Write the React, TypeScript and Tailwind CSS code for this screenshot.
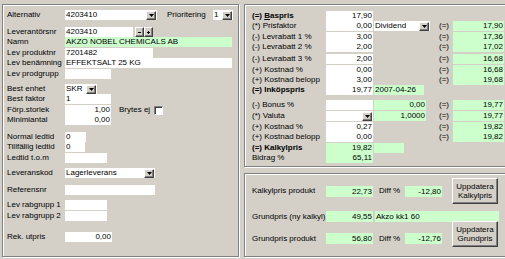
import React from 'react';

const panel =
  'border border-[#808080] shadow-[inset_1px_1px_0_#fff,1px_1px_0_#fff]';

const raised =
  'bg-[#d4d0c8] border border-t-white border-l-white border-r-[#404040] border-b-[#404040] shadow-[inset_-1px_-1px_0_#808080]';

function Arrow() {
  return (
    <svg width="5" height="3" viewBox="0 0 5 3">
      <path d="M0 0h5L2.5 3z" fill="#000" />
    </svg>
  );
}

function DropBtn() {
  return (
    <div className={`w-[10px] h-[9px] shrink-0 flex items-center justify-center ${raised}`}>
      <Arrow />
    </div>
  );
}

function Field({ w, green, right, children, className = '' }: { w: string; green?: boolean; right?: boolean; children?: React.ReactNode; className?: string }) {
  return (
    <div
      className={`${w} h-full shrink-0 whitespace-nowrap overflow-hidden px-[1px] ${green ? 'bg-[#ccffcc]' : 'bg-white'} ${right ? 'text-right' : 'text-left'} ${className}`}
    >
      {children}
    </div>
  );
}

function Combo({ w, children }: { w: string; children?: React.ReactNode }) {
  return (
    <div className={`${w} h-full shrink-0 bg-white flex items-center justify-between pl-[1px] pr-[1px]`}>
      <span className="whitespace-nowrap">{children}</span>
      <DropBtn />
    </div>
  );
}

function LRow({ label, mt, children }: { label: string; mt: string; children?: React.ReactNode }) {
  return (
    <div className={`flex items-center h-[10px] ${mt}`}>
      <div className="w-[58px] shrink-0 whitespace-nowrap">{label}</div>
      {children}
    </div>
  );
}

function RRow({
  label,
  bold,
  mt,
  f1,
  col2,
  eq,
}: {
  label: React.ReactNode;
  bold?: boolean;
  mt: string;
  f1?: React.ReactNode;
  col2?: React.ReactNode;
  eq?: string;
}) {
  return (
    <div className={`flex items-center h-[10px] ${mt}`}>
      <div className={`w-[74px] shrink-0 whitespace-nowrap ${bold ? 'font-bold' : ''}`}>{label}</div>
      {f1 === undefined ? <div className="w-[47px] shrink-0" /> : f1}
      <div className="w-[1px] shrink-0" />
      <div className="w-[52px] h-full shrink-0 flex">{col2}</div>
      {eq !== undefined && (
        <>
          <div className="w-[27px] shrink-0 pl-[13px]">(=)</div>
          <Field w="w-[51px]" green right>
            {eq}
          </Field>
        </>
      )}
    </div>
  );
}

function Btn({ children }: { children: React.ReactNode }) {
  return (
    <div className={`w-[46px] h-[26px] shrink-0 flex items-center justify-center text-center leading-[9px] ${raised}`}>
      <div>{children}</div>
    </div>
  );
}

export default function App() {
  return (
    <div className="w-[505px] h-[259px] overflow-hidden bg-[#d4d0c8] text-black text-[8px] leading-[10px] [font-family:'Liberation_Sans',Arial,sans-serif] flex pt-[4px] pl-[2px] gap-[5px]">
      {/* Left panel */}
      <div className={`w-[237px] h-[253px] shrink-0 pl-[4px] flex flex-col ${panel}`}>
        <LRow label="Alternativ" mt="mt-[5px]">
          <Combo w="w-[92px]">4203410</Combo>
          <div className="ml-[10px] w-[46px] shrink-0">Prioritering</div>
          <Combo w="w-[20px]">1</Combo>
        </LRow>
        <LRow label="Leverantörsnr" mt="mt-[7px]">
          <Field w="w-[68px]">4203410</Field>
          <div className={`ml-[2px] w-[9px] h-[10px] flex items-center justify-center ${raised}`}>
            <div className="w-[3px] h-[1px] bg-black" />
          </div>
          <div className={`relative w-[9px] h-[10px] flex items-center justify-center ${raised}`}>
            <div className="w-[3px] h-[1px] bg-black" />
            <div className="absolute w-[1px] h-[3px] bg-black" />
          </div>
        </LRow>
        <LRow label="Namn" mt="mt-[0px]">
          <Field w="w-[167px]" green>
            AKZO NOBEL CHEMICALS AB
          </Field>
        </LRow>
        <LRow label="Lev produktnr" mt="mt-[1px]">
          <Field w="w-[88px]">7201482</Field>
        </LRow>
        <LRow label="Lev benämning" mt="mt-[0px]">
          <Field w="w-[167px]">EFFEKTSALT 25 KG</Field>
        </LRow>
        <LRow label="Lev prodgrupp" mt="mt-[1px]">
          <Field w="w-[46px]" />
        </LRow>
        <LRow label="Best enhet" mt="mt-[5px]">
          <Combo w="w-[32px]">SKR</Combo>
        </LRow>
        <LRow label="Best faktor" mt="mt-[0px]">
          <Field w="w-[46px]">1</Field>
        </LRow>
        <LRow label="Förp.storlek" mt="mt-[1px]">
          <Field w="w-[46px]" right>
            1,00
          </Field>
          <div className="ml-[8px] w-[35px] shrink-0">Brytes ej</div>
          <div className="w-[9px] h-[9px] bg-white border border-t-[#808080] border-l-[#808080] border-r-white border-b-white shadow-[inset_1px_1px_0_#404040]" />
        </LRow>
        <LRow label="Minimiantal" mt="mt-[0px]">
          <Field w="w-[46px]" right>
            0,00
          </Field>
        </LRow>
        <LRow label="Normal ledtid" mt="mt-[7px]">
          <Field w="w-[21px]">0</Field>
        </LRow>
        <LRow label="Tillfällig ledtid" mt="mt-[0px]">
          <Field w="w-[20px]">0</Field>
        </LRow>
        <LRow label="Ledtid t.o.m" mt="mt-[1px]">
          <Field w="w-[42px]" />
        </LRow>
        <LRow label="Leveranskod" mt="mt-[5px]">
          <Combo w="w-[90px]">Lagerleverans</Combo>
        </LRow>
        <LRow label="Referensnr" mt="mt-[7px]">
          <Field w="w-[90px]" />
        </LRow>
        <LRow label="Lev rabgrupp 1" mt="mt-[5px]">
          <Field w="w-[42px]" />
        </LRow>
        <LRow label="Lev rabgrupp 2" mt="mt-[1px]">
          <Field w="w-[42px]" />
        </LRow>
        <LRow label="Rek. utpris" mt="mt-[11px]">
          <Field w="w-[47px]" right>
            0,00
          </Field>
        </LRow>
      </div>

      {/* Right column */}
      <div className="w-[265px] shrink-0 flex flex-col gap-[6px]">
        <div className={`h-[163px] pl-[7px] flex flex-col ${panel}`}>
          <RRow
            mt="mt-[6px]"
            bold
            label={
              <>
                (=) <span className="underline">B</span>aspris
              </>
            }
            f1={<Field w="w-[47px]" right>17,90</Field>}
          />
          <RRow
            mt="mt-[0px]"
            label="(*) Prisfaktor"
            f1={<Field w="w-[47px]" right>0,00</Field>}
            col2={<Combo w="w-[56px]">Dividend</Combo>}
            eq="17,90"
          />
          <RRow mt="mt-[1px]" label="(-) Levrabatt 1 %" f1={<Field w="w-[47px]" right>3,00</Field>} eq="17,36" />
          <RRow mt="mt-[0px]" label="(-) Levrabatt 2 %" f1={<Field w="w-[47px]" right>2,00</Field>} eq="17,02" />
          <RRow mt="mt-[2px]" label="(-) Levrabatt 3 %" f1={<Field w="w-[47px]" right>2,00</Field>} eq="16,68" />
          <RRow mt="mt-[1px]" label="(+) Kostnad %" f1={<Field w="w-[47px]" right>0,00</Field>} eq="16,68" />
          <RRow mt="mt-[0px]" label="(+) Kostnad belopp" f1={<Field w="w-[47px]" right>3,00</Field>} eq="19,68" />
          <RRow
            mt="mt-[0px]"
            bold
            label="(=) Inköpspris"
            f1={<Field w="w-[47px]" right>19,77</Field>}
            col2={<Field w="w-[50px]" green className="text-center">2007-04-26</Field>}
          />
          <RRow
            mt="mt-[5px]"
            label="(-) Bonus %"
            f1={<Field w="w-[47px]" />}
            col2={<Field w="w-[52px]" green right>0,00</Field>}
            eq="19,77"
          />
          <RRow
            mt="mt-[1px]"
            label="(*) Valuta"
            f1={<Combo w="w-[47px]" />}
            col2={<Field w="w-[52px]" green right>1,0000</Field>}
            eq="19,77"
          />
          <RRow mt="mt-[1px]" label="(+) Kostnad %" f1={<Field w="w-[47px]" right>0,27</Field>} eq="19,82" />
          <RRow mt="mt-[0px]" label="(+) Kostnad belopp" f1={<Field w="w-[47px]" right>0,00</Field>} eq="19,82" />
          <RRow
            mt="mt-[1px]"
            bold
            label="(=) Kalkylpris"
            f1={<Field w="w-[47px]" green right>19,82</Field>}
            col2={<Field w="w-[30px]" green />}
          />
          <RRow mt="mt-[0px]" label="Bidrag %" f1={<Field w="w-[47px]" green right>65,11</Field>} />
        </div>

        <div className={`h-[84px] pl-[7px] flex flex-col ${panel}`}>
          <div className="mt-[4px] h-[26px] flex items-center">
            <div className="w-[74px] shrink-0 whitespace-nowrap">Kalkylpris produkt</div>
            <div className="h-[11px] flex leading-[11px]">
              <Field w="w-[47px]" green right>22,73</Field>
            </div>
            <div className="ml-[6px] w-[26px] shrink-0">Diff %</div>
            <div className="h-[11px] flex leading-[11px]">
              <Field w="w-[37px]" green right>-12,80</Field>
            </div>
            <div className="ml-[10px]">
              <Btn>
                Uppdatera
                <br />
                Kalkylpris
              </Btn>
            </div>
          </div>
          <div className="mt-[7px] h-[11px] leading-[11px] flex">
            <div className="w-[74px] shrink-0 whitespace-nowrap">Grundpris (ny kalkyl)</div>
            <Field w="w-[47px]" green right>49,55</Field>
            <div className="w-[2px] shrink-0" />
            <Field w="w-[124px]" green>Akzo kk1 60</Field>
          </div>
          <div className="-mt-[2px] h-[27px] flex items-end">
            <div className="mb-[3px] h-[11px] leading-[11px] flex">
              <div className="w-[74px] shrink-0 whitespace-nowrap">Grundpris produkt</div>
              <Field w="w-[47px]" green right>56,80</Field>
              <div className="ml-[6px] w-[26px] shrink-0">Diff %</div>
              <Field w="w-[37px]" green right>-12,76</Field>
            </div>
            <div className="ml-[10px]">
              <Btn>
                Uppdatera
                <br />
                Grundpris
              </Btn>
            </div>
          </div>
        </div>
      </div>
    </div>
  );
}
